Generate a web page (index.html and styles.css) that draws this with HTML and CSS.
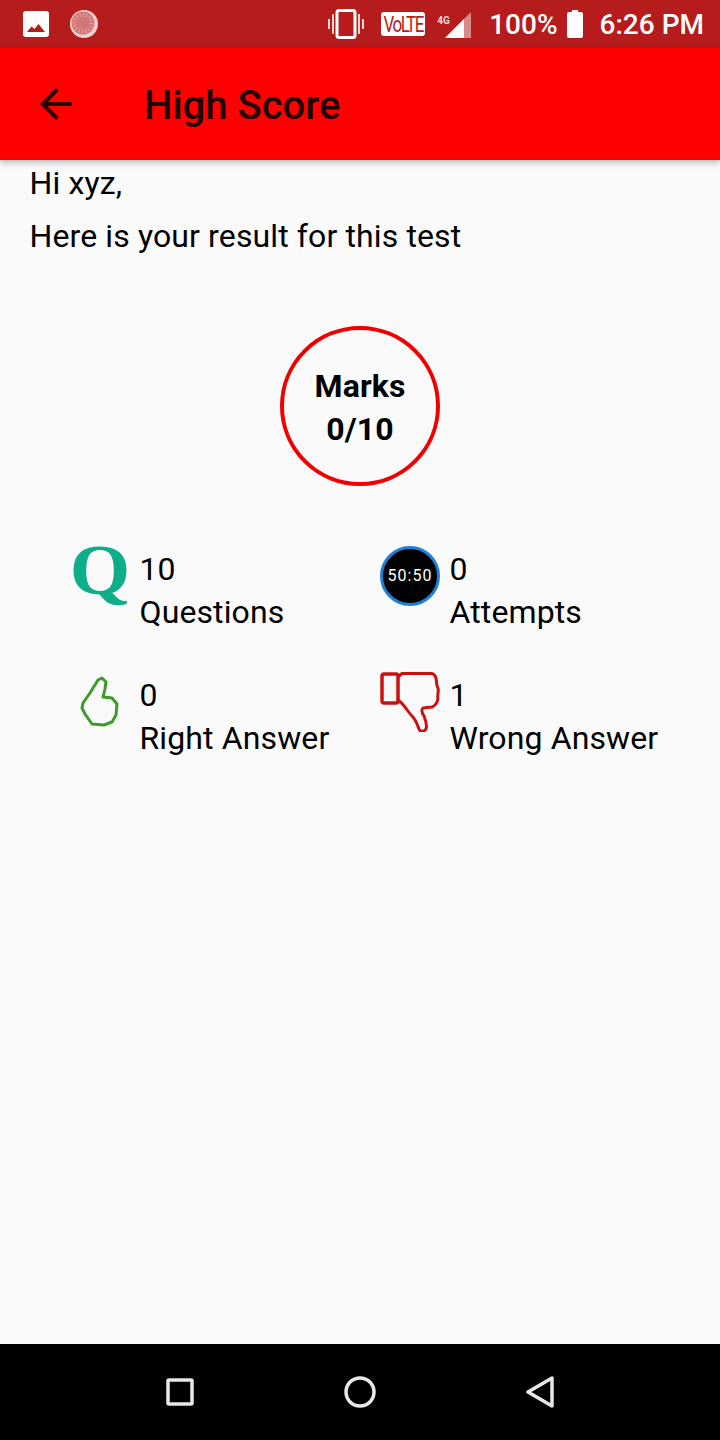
FILE: index.html
```html
<!DOCTYPE html>
<html>
<head>
  <title>High Score</title>
  <link rel="stylesheet" href="styles.css">
</head>
<body>
  <div class="status-bar">
    <div class="status-left">
      <svg class="ic-picture" width="26" height="26" viewBox="0 0 26 26">
        <rect width="26" height="26" rx="3" fill="#fff"/>
        <path d="M4 21 L8.500 15.500 L11.500 18 L15.500 13 L22 21 Z" fill="#b71c1c"/>
      </svg>
      <svg class="ic-spinner" width="28" height="28" viewBox="0 0 28 28">
        <circle cx="14" cy="14" r="14" fill="#f1d2d2"/>
        <circle cx="13" cy="13" r="11.500" fill="#d27777"/>
        <circle cx="13" cy="13" r="8.500" fill="none" stroke="#e09a9a" stroke-width="4" stroke-dasharray="1.300 2"/>
      </svg>
    </div>
    <div class="status-right">
      <svg class="ic-vibrate" width="36" height="30" viewBox="0 0 36 30">
        <rect x="9" y="1.500" width="18" height="27" rx="2" fill="none" stroke="#fff" stroke-width="3"/>
        <path d="M5 5 V25 M1 10 V20 M31 5 V25 M35 10 V20" stroke="#f3d6d6" stroke-width="2"/>
      </svg>
      <span class="volte"><span class="volte-text">VoLTE</span></span>
      <span class="signal">
        <span class="net">4G</span>
        <svg width="26" height="26" viewBox="0 0 26 26">
          <path d="M0 26 L26 0 V26 Z" fill="#d88a8a"/>
          <path d="M0 26 L19 7 V26 Z" fill="#fff"/>
        </svg>
      </span>
      <span class="status-text">100%</span>
      <svg class="ic-battery" width="16" height="28" viewBox="0 0 16 28">
        <path d="M5 0 H11 V2 H14 Q16 2 16 4 V26 Q16 28 14 28 H2 Q0 28 0 26 V4 Q0 2 2 2 H5 Z" fill="#fff"/>
      </svg>
      <span class="status-text">6:26 PM</span>
    </div>
  </div>

  <div class="toolbar">
    <svg class="ic-back" width="32" height="32" viewBox="0 0 32 32">
      <path d="M32 14 H7.700 L18.900 2.800 L16 0 L0 16 L16 32 L18.800 29.200 L7.700 18 H32 Z" fill="#2a0000"/>
    </svg>
    <span class="title">High Score</span>
  </div>

  <div class="content">
    <p class="greeting">Hi xyz,</p>
    <p class="subtitle">Here is your result for this test</p>

    <div class="marks-wrap">
      <div class="marks">
        <span>Marks</span>
        <span>0/10</span>
      </div>
    </div>

    <div class="stats">
      <div class="stat">
        <div class="stat-icon"><span class="q-icon">Q</span></div>
        <div class="stat-text"><span>10</span><span>Questions</span></div>
      </div>
      <div class="stat">
        <div class="stat-icon"><span class="timer-icon">50:50</span></div>
        <div class="stat-text"><span>0</span><span>Attempts</span></div>
      </div>
      <div class="stat">
        <div class="stat-icon">
          <svg width="60" height="60" viewBox="0 0 60 60">
            <path d="M13 31 L20 21 L28 8 L32 6 L36 10 L35 17 L33 25 L42 26 L47 32 L46 43 L42 50 L34 53 L22 52 L15 42 L12 36 Z" fill="none" stroke="#3f9a2c" stroke-width="3" stroke-linejoin="round"/>
          </svg>
        </div>
        <div class="stat-text"><span>0</span><span>Right Answer</span></div>
      </div>
      <div class="stat">
        <div class="stat-icon">
          <svg width="60" height="60" viewBox="0 0 60 60">
            <rect x="2" y="2" width="16" height="29" rx="2" fill="none" stroke="#cc1010" stroke-width="3.500"/>
            <path d="M18 5 L22 1.500 H51 C54 1.500 55 3 56 6 C57 11 56 13 58 16 C59 20 57 23 58 27 C57 31 55 34 52 35 L43 36 C41 38 42 41 44 44 C46 49 47 54 46 57 C44 60 40 60 39 57 C37 52 36 48 32 44 C27 39 25 33 18 28" fill="none" stroke="#cc1010" stroke-width="3" stroke-linejoin="round"/>
          </svg>
        </div>
        <div class="stat-text"><span>1</span><span>Wrong Answer</span></div>
      </div>
    </div>
  </div>

  <div class="nav-bar">
    <svg width="28" height="28" viewBox="0 0 28 28">
      <rect x="2" y="2" width="24" height="24" rx="1" fill="none" stroke="#e8e8e8" stroke-width="3.500"/>
    </svg>
    <svg width="32" height="32" viewBox="0 0 32 32">
      <circle cx="16" cy="16" r="14" fill="none" stroke="#e8e8e8" stroke-width="3.500"/>
    </svg>
    <svg width="28" height="32" viewBox="0 0 28 32">
      <path d="M26 2 V30 L2 16 Z" fill="none" stroke="#e8e8e8" stroke-width="3.500" stroke-linejoin="round"/>
    </svg>
  </div>
</body>
</html>
```

FILE: styles.css
```css
* {
  box-sizing: border-box;
}

html, body {
  height: 100%;
}

body {
  margin: 0;
  height: 1440px;
  display: flex;
  flex-direction: column;
  font-family: Roboto, sans-serif;
  background-color: #fafafa;
  color: #000;
  overflow: hidden;
}

/* Status bar */
.status-bar {
  height: 48px;
  flex: none;
  display: flex;
  justify-content: space-between;
  align-items: center;
  background-color: #b71c1c;
  color: #fff;
  padding: 0 16px 0 23px;
}

.status-left, .status-right {
  display: flex;
  align-items: center;
}

.ic-picture {
  margin-right: 21px;
}

.ic-vibrate {
  margin-right: 17px;
}

.volte {
  width: 44px;
  height: 24px;
  flex: none;
  display: flex;
  justify-content: center;
  align-items: center;
  border-radius: 3px;
  background-color: #fff;
  color: #b71c1c;
  margin-right: 12px;
}

.volte-text {
  display: inline-block;
  font-size: 17px;
  line-height: 20px;
  letter-spacing: -1.5px;
  transform: scaleY(1.35);
}

.signal {
  display: flex;
  align-items: flex-start;
  margin: 2px 18px 0 0;
}

.net {
  width: 12px;
  font-size: 10px;
  font-weight: 700;
  line-height: 12px;
  margin: 3px -4px 0 0;
  color: #f3d6d6;
}

.status-text {
  font-size: 28px;
  font-weight: 500;
}

.ic-battery {
  margin: 0 17px 0 9px;
}

/* Toolbar */
.toolbar {
  height: 112px;
  flex: none;
  display: flex;
  align-items: center;
  background-color: #f00;
  padding-left: 40px;
  box-shadow: 0 3px 6px rgba(0, 0, 0, 0.25);
  position: relative;
}

.ic-back {
  flex: none;
}

.title {
  font-size: 40px;
  font-weight: 500;
  color: #210000;
  margin: 3px 0 0 72px;
}

/* Content */
.content {
  flex: 1;
  padding: 4px 29.5px 0;
  font-size: 32px;
  letter-spacing: 0.12px;
}

.greeting, .subtitle {
  margin: 0;
}

.subtitle {
  margin-top: 15px;
}

.marks-wrap {
  display: flex;
  justify-content: center;
  margin-top: 71px;
}

.marks {
  width: 160px;
  height: 160px;
  border: 4px solid #f00000;
  border-radius: 50%;
  padding-top: 4px;
  display: flex;
  flex-direction: column;
  align-items: center;
  justify-content: center;
  font-weight: 700;
  line-height: 43px;
}

.stats {
  display: grid;
  grid-template-columns: 310px 310px;
  grid-auto-rows: 126px;
  margin: 60px 0 0 40.5px;
}

.stat {
  display: flex;
  align-items: flex-start;
}

.stat-icon {
  width: 60px;
  height: 60px;
  flex: none;
  margin-right: 9.5px;
  display: flex;
  align-items: center;
  justify-content: center;
}

.stat-text {
  display: flex;
  flex-direction: column;
  line-height: 43px;
  margin-top: 2px;
  white-space: nowrap;
}

.q-icon {
  font-family: "Liberation Serif", serif;
  font-weight: 700;
  font-size: 72px;
  line-height: 50px;
  color: #0fae8a;
  transform: translateY(-6px) scaleX(1.08);
}

.timer-icon {
  width: 60px;
  height: 60px;
  border: 3px solid #1e7fd8;
  border-radius: 50%;
  background-color: #000;
  color: #fff;
  font-size: 16px;
  line-height: 54px;
  letter-spacing: 1px;
  text-align: center;
}

/* Navigation bar */
.nav-bar {
  height: 96px;
  flex: none;
  display: flex;
  justify-content: center;
  align-items: center;
  gap: 150px;
  background-color: #000;
}
```
